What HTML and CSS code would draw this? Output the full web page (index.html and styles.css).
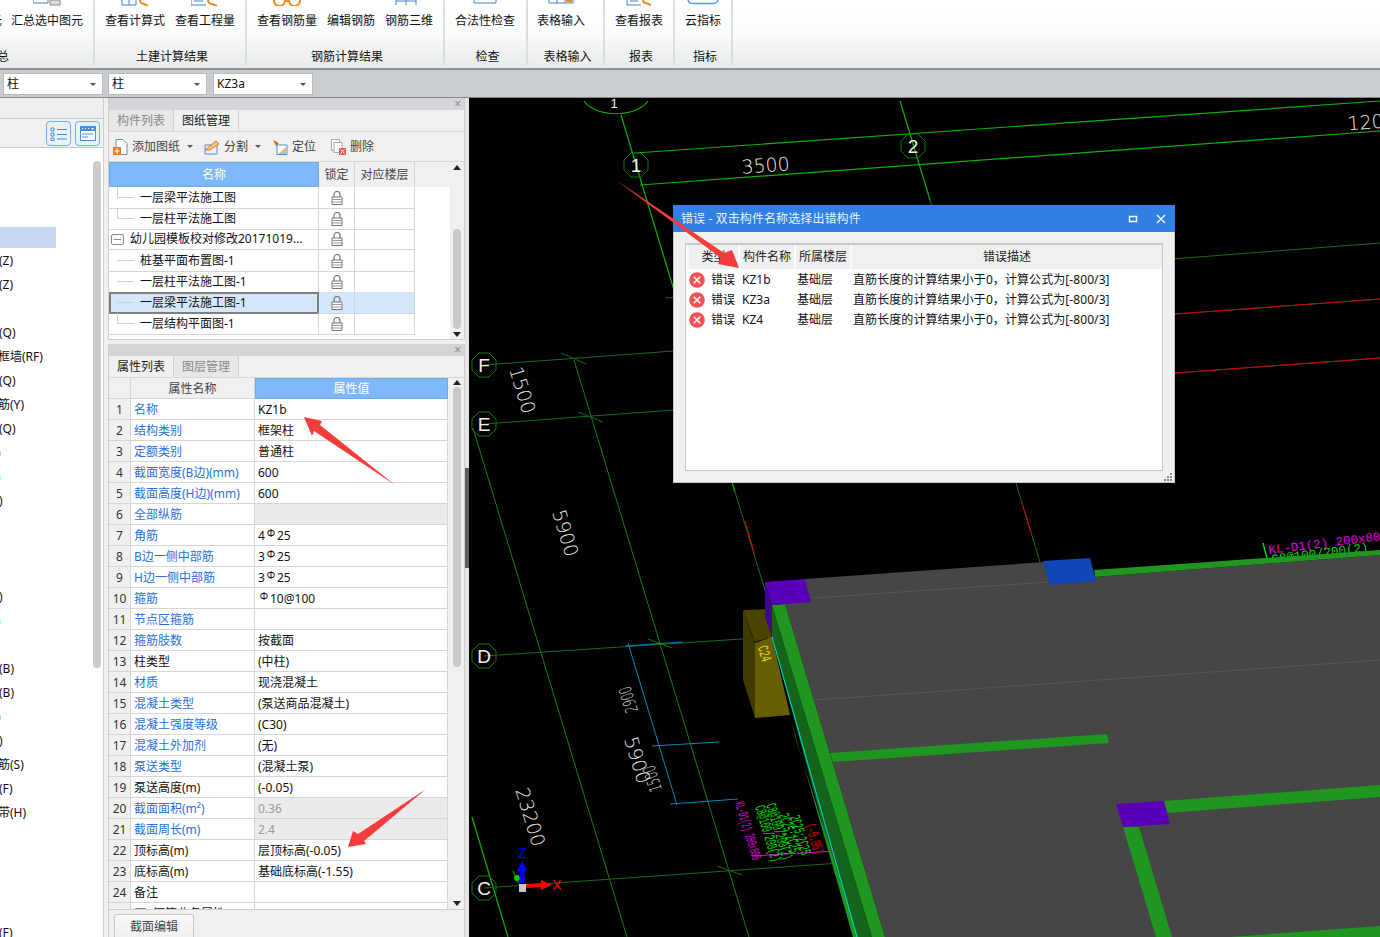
FILE: index.html
```html
<!DOCTYPE html>
<html lang="zh-CN">
<head>
<meta charset="utf-8">
<title>错误 - 双击构件名称选择出错构件</title>
<link rel="stylesheet" href="styles.css">
</head>
<body>
<svg class="defs" width="0" height="0">
  <defs>
    <symbol id="lock" viewBox="0 0 12 14">
      <path d="M3 6V3.5a3 3 0 0 1 6 0V6" fill="none" stroke="#777" stroke-width="1.2"/>
      <path d="M1 6h10v7.5H1z" fill="#fff" stroke="#777"/>
      <path d="M1 8.5h10M1 11h10" stroke="#999"/>
    </symbol>
    <symbol id="err" viewBox="0 0 16 16">
      <circle cx="8" cy="8" r="7.8" fill="#f25252"/>
      <path d="M4.8 4.8l6.4 6.4M11.2 4.8l-6.4 6.4" stroke="#fff" stroke-width="1.6"/>
    </symbol>
  </defs>
</svg>

<header class="ribbon">
  <section class="group g1">
    <div class="btns">
      <div class="btn"><svg class="ri narrow" viewBox="0 0 12 6"></svg><span>元</span></div>
      <div class="btn"><svg class="ri" viewBox="0 0 28 6"><path d="M0 0v3h15V0" fill="none" stroke="#3f86d0"/><path d="M17 0h10v5H17z" fill="#ddd" stroke="#888"/></svg><span>汇总选中图元</span></div>
    </div>
    <div class="glabel">总</div>
  </section>
  <section class="group g2">
    <div class="btns">
      <div class="btn"><svg class="ri" viewBox="0 0 28 6"><path d="M1 0v5h14V0M8 0v5" fill="none" stroke="#3f86d0"/><path d="M19 0a4 4 0 0 0 4 4l4 2" fill="none" stroke="#ef8a1e" stroke-width="2"/></svg><span>查看计算式</span></div>
      <div class="btn"><svg class="ri" viewBox="0 0 28 6"><path d="M0 0v5h15M3 1h9" fill="none" stroke="#3f86d0"/><path d="M17 0a4 4 0 0 0 4 4l5 2" fill="none" stroke="#ef8a1e" stroke-width="2"/></svg><span>查看工程量</span></div>
    </div>
    <div class="glabel">土建计算结果</div>
  </section>
  <section class="group g3">
    <div class="btns">
      <div class="btn"><svg class="ri" viewBox="0 0 28 6"><path d="M1 0a5 5 0 0 0 11 1h4a5 5 0 0 0 11-1" fill="none" stroke="#ef8a1e" stroke-width="2"/></svg><span>查看钢筋量</span></div>
      <div class="btn"><svg class="ri" viewBox="0 0 28 6"></svg><span>编辑钢筋</span></div>
      <div class="btn"><svg class="ri" viewBox="0 0 28 6"><path d="M1 0v5M11 0v5M21 0v5M1 1h20" fill="none" stroke="#3f86d0"/></svg><span>钢筋三维</span></div>
    </div>
    <div class="glabel">钢筋计算结果</div>
  </section>
  <section class="group g4">
    <div class="btns"><div class="btn"><svg class="ri" viewBox="0 0 28 6"><path d="M3 0v3h22V0" fill="none" stroke="#3f86d0"/></svg><span>合法性检查</span></div></div>
    <div class="glabel">检查</div>
  </section>
  <section class="group g5">
    <div class="btns"><div class="btn"><svg class="ri" viewBox="0 0 28 6"><path d="M2 0v3h24V0M10 0v3M18 0v3" fill="none" stroke="#3f86d0"/><path d="M19 0h6v2h-6z" fill="#ef8a1e"/></svg><span>表格输入</span></div></div>
    <div class="glabel">表格输入</div>
  </section>
  <section class="group g6">
    <div class="btns"><div class="btn"><svg class="ri" viewBox="0 0 28 6"><path d="M2 0v5h14M5 1h8" fill="none" stroke="#3f86d0"/><path d="M18 0a3 3 0 0 0 3 3l5 2" fill="none" stroke="#ef8a1e" stroke-width="2"/></svg><span>查看报表</span></div></div>
    <div class="glabel">报表</div>
  </section>
  <section class="group g7">
    <div class="btns"><div class="btn"><svg class="ri wide" viewBox="0 0 32 6"><path d="M1 0c1 4 4 3.500 7 3.500h16c3 0 6 .5 7-3.500" fill="none" stroke="#4a9ae8" stroke-width="1.500"/></svg><span>云指标</span></div></div>
    <div class="glabel">指标</div>
  </section>
</header>

<nav class="selbar">
  <div class="sel s1"><span>柱</span><i class="caret"></i></div>
  <div class="sel s2"><span>柱</span><i class="caret"></i></div>
  <div class="sel s3"><span>KZ3a</span><i class="caret"></i></div>
</nav>

<main class="main">
  <aside class="left">
    <div class="lstrip"></div>
    <div class="ltools">
      <div class="lbtn"><svg width="18" height="14" viewBox="0 0 18 14"><path d="M1 1h3v3H1zM1 6h3v3H1zM1 11h3v2.500H1z" fill="none" stroke="#4a90d9"/><path d="M7 2.500h10M7 7.500h10M7 12h10" stroke="#4a90d9"/></svg></div>
      <div class="lbtn"><svg width="16" height="15" viewBox="0 0 16 15"><path d="M.5.5h15v14H.5z" fill="#fff" stroke="#4a90d9"/><path d="M0 0h16v5H0z" fill="#4a90d9"/><path d="M2 2h1v1H2zM5 2h1v1H5zM8 2h1v1H8zM11 2h3l-1.500 2z" fill="#fff"/><path d="M2 8h11M2 11h6" stroke="#4a90d9"/></svg></div>
    </div>
    <div class="lbody">
      <div class="llist">
        <div class="lr"></div><div class="lr"></div><div class="lr"></div>
        <div class="lr sel-row"><b></b></div>
        <div class="lr">(Z)</div>
        <div class="lr">(Z)</div>
        <div class="lr"></div>
        <div class="lr">(Q)</div>
        <div class="lr on">框墙(RF)</div>
        <div class="lr">(Q)</div>
        <div class="lr on">筋(Y)</div>
        <div class="lr">(Q)</div>
        <div class="lr frag blue">)</div>
        <div class="lr frag cyan">)</div>
        <div class="lr">)</div>
        <div class="lr"></div><div class="lr"></div><div class="lr"></div>
        <div class="lr">)</div>
        <div class="lr frag cyan">)</div>
        <div class="lr"></div>
        <div class="lr">(B)</div>
        <div class="lr">(B)</div>
        <div class="lr frag blue">)</div>
        <div class="lr">)</div>
        <div class="lr on">筋(S)</div>
        <div class="lr">(F)</div>
        <div class="lr on">带(H)</div>
        <div class="lr"></div><div class="lr"></div><div class="lr"></div><div class="lr"></div>
        <div class="lr">(F)</div>
      </div>
      <div class="lthumb"></div>
    </div>
  </aside>

  <div class="mid">
    <section class="panel p1">
      <div class="pstrip"><span>×</span></div>
      <div class="tabs">
        <div class="tab off">构件列表</div>
        <div class="tab active">图纸管理</div>
      </div>
      <div class="ptools">
        <div class="pt t-add"><svg width="15" height="16" viewBox="0 0 15 16"><path d="M3 .5h7l4 4v11H3z" fill="#fff" stroke="#6d8fb5"/><path d="M0 8h8v8H0z" fill="#ef7d1a"/><path d="M4 9.500v5M1.500 12h5" stroke="#fff" stroke-width="1.200"/></svg><span>添加图纸</span><i class="caret"></i></div>
        <div class="pt t-split"><svg width="17" height="16" viewBox="0 0 17 16"><path d="M2 6h12v9H2z" fill="none" stroke="#4a90d9"/><path d="M2 11L13 2l3 3-9 6z" fill="#f5c08a" stroke="#e07c1c"/></svg><span>分割</span><i class="caret"></i></div>
        <div class="pt t-loc"><svg width="16" height="16" viewBox="0 0 16 16"><path d="M5 6h10v9.500H5z" fill="#fff" stroke="#4a90d9"/><path d="M6 15l8-7v7z" fill="#f3b27a"/><path d="M1 1l6 3-3 3z" fill="#e8631c"/></svg><span>定位</span></div>
        <div class="pt t-del"><svg width="15" height="16" viewBox="0 0 15 16"><path d="M.5.500h8v11h-8z" fill="#fff" stroke="#aaa"/><path d="M3 3.500h8v10H3z" fill="#fff" stroke="#aaa"/><path d="M8 9h7v7H8z" fill="#e25c5c"/><path d="M9.500 10.500l4 4M13.500 10.500l-4 4" stroke="#fff"/></svg><span>删除</span></div>
      </div>
      <div class="pbody">
        <div class="dtable">
          <div class="dhead">
            <div class="dh blue">名称</div><div class="dh">锁定</div><div class="dh">对应楼层</div><div class="dh blank"></div>
          </div>
          <div class="drow"><div class="dname"><i class="twig first"></i>一层梁平法施工图</div><div class="dlock"><svg class="lock"><use href="#lock"/></svg></div><div class="dfloor"></div></div>
          <div class="drow"><div class="dname"><i class="twig"></i>一层柱平法施工图</div><div class="dlock"><svg class="lock"><use href="#lock"/></svg></div><div class="dfloor"></div></div>
          <div class="drow"><div class="dname parent"><i class="minus"></i>幼儿园模板校对修改20171019...</div><div class="dlock"><svg class="lock"><use href="#lock"/></svg></div><div class="dfloor"></div></div>
          <div class="drow"><div class="dname"><i class="twig flat"></i>桩基平面布置图-1</div><div class="dlock"><svg class="lock"><use href="#lock"/></svg></div><div class="dfloor"></div></div>
          <div class="drow"><div class="dname"><i class="twig flat"></i>一层柱平法施工图-1</div><div class="dlock"><svg class="lock"><use href="#lock"/></svg></div><div class="dfloor"></div></div>
          <div class="drow picked"><div class="dname"><i class="twig flat"></i>一层梁平法施工图-1</div><div class="dlock"><svg class="lock"><use href="#lock"/></svg></div><div class="dfloor"></div></div>
          <div class="drow"><div class="dname"><i class="twig"></i>一层结构平面图-1</div><div class="dlock"><svg class="lock"><use href="#lock"/></svg></div><div class="dfloor"></div></div>
        </div>
        <div class="vscroll v1"><i class="up"></i><i class="thumb"></i><i class="down"></i></div>
      </div>
    </section>

    <section class="panel p2">
      <div class="pstrip"><span>×</span></div>
      <div class="tabs">
        <div class="tab active">属性列表</div>
        <div class="tab off">图层管理</div>
      </div>
      <div class="pbody prop">
        <div class="ptable">
          <div class="prow head"><div class="no"></div><div class="nm">属性名称</div><div class="val blue">属性值</div></div>
          <div class="prow"><div class="no">1</div><div class="nm lnk">名称</div><div class="val">KZ1b</div></div>
          <div class="prow"><div class="no">2</div><div class="nm lnk">结构类别</div><div class="val">框架柱</div></div>
          <div class="prow"><div class="no">3</div><div class="nm lnk">定额类别</div><div class="val">普通柱</div></div>
          <div class="prow"><div class="no">4</div><div class="nm lnk">截面宽度(B边)(mm)</div><div class="val">600</div></div>
          <div class="prow"><div class="no">5</div><div class="nm lnk">截面高度(H边)(mm)</div><div class="val">600</div></div>
          <div class="prow"><div class="no">6</div><div class="nm lnk">全部纵筋</div><div class="val ro"></div></div>
          <div class="prow"><div class="no">7</div><div class="nm lnk">角筋</div><div class="val">4<span class="rb">Φ</span>25</div></div>
          <div class="prow"><div class="no">8</div><div class="nm lnk">B边一侧中部筋</div><div class="val">3<span class="rb">Φ</span>25</div></div>
          <div class="prow"><div class="no">9</div><div class="nm lnk">H边一侧中部筋</div><div class="val">3<span class="rb">Φ</span>25</div></div>
          <div class="prow"><div class="no">10</div><div class="nm lnk">箍筋</div><div class="val"><span class="rb">Φ</span>10@100</div></div>
          <div class="prow"><div class="no">11</div><div class="nm lnk">节点区箍筋</div><div class="val"></div></div>
          <div class="prow"><div class="no">12</div><div class="nm lnk">箍筋肢数</div><div class="val">按截面</div></div>
          <div class="prow"><div class="no">13</div><div class="nm">柱类型</div><div class="val">(中柱)</div></div>
          <div class="prow"><div class="no">14</div><div class="nm lnk">材质</div><div class="val">现浇混凝土</div></div>
          <div class="prow"><div class="no">15</div><div class="nm lnk">混凝土类型</div><div class="val">(泵送商品混凝土)</div></div>
          <div class="prow"><div class="no">16</div><div class="nm lnk">混凝土强度等级</div><div class="val">(C30)</div></div>
          <div class="prow"><div class="no">17</div><div class="nm lnk">混凝土外加剂</div><div class="val">(无)</div></div>
          <div class="prow"><div class="no">18</div><div class="nm lnk">泵送类型</div><div class="val">(混凝土泵)</div></div>
          <div class="prow"><div class="no">19</div><div class="nm">泵送高度(m)</div><div class="val">(-0.05)</div></div>
          <div class="prow"><div class="no">20</div><div class="nm lnk">截面面积(m²)</div><div class="val ro">0.36</div></div>
          <div class="prow"><div class="no">21</div><div class="nm lnk">截面周长(m)</div><div class="val ro">2.4</div></div>
          <div class="prow"><div class="no">22</div><div class="nm">顶标高(m)</div><div class="val">层顶标高(-0.05)</div></div>
          <div class="prow"><div class="no">23</div><div class="nm">底标高(m)</div><div class="val">基础底标高(-1.55)</div></div>
          <div class="prow"><div class="no">24</div><div class="nm">备注</div><div class="val"></div></div>
          <div class="prow"><div class="no"></div><div class="nm"><i class="minus small"></i>钢筋业务属性</div><div class="val"></div></div>
        </div>
        <div class="vscroll v2"><i class="up"></i><i class="thumb"></i><i class="down"></i></div>
      </div>
      <div class="pfoot"><div class="fbtn">截面编辑</div></div>
    </section>
  </div>

  <div class="splitter"><i></i></div>

  <div class="canvas">
    <svg class="cad" viewBox="469 98 911 839" width="911" height="839">
      <defs>
        <polygon id="oct" points="-12,-5 -5,-12 5,-12 12,-5 12,5 5,12 -5,12 -12,5"/>
      </defs>
      <path class="la" d="M635 153L1380 101M640 185L1380 131"/>
      <path class="la" d="M621 115L735 492M900 101L930 200"/>
      <path class="ld" d="M735 492L768 600M930 200L1040 562"/>
      <path class="lr-red" d="M745 521L755 556M1022 503L1031 533"/>
      <path class="ld" d="M484 365L1380 299M484 424L1380 358M665 298L1380 243"/>
      <path class="lr-red" d="M1175 314L1380 299M1175 373L1380 358"/>
      <path class="lm" d="M574 360L749 937M473 428L627 937"/>
      <path class="la" d="M472 817L508 937"/>
      <path class="ld" d="M484 656L772 637M484 888L840 863M561 353L586 364M578 412L603 422M648 639L672 648M717 866L742 875"/>
      <path class="lb" d="M625 646L683 642M628 643L677 805M652 746L719 742M670 804L738 799"/>
      <path class="la" d="M584 101C596 118 636 118 648 101" />
      <g class="oct">
        <use href="#oct" x="636" y="165"/><use href="#oct" x="913" y="146"/>
        <use href="#oct" x="484" y="365"/><use href="#oct" x="484" y="424"/>
        <use href="#oct" x="484" y="656"/><use href="#oct" x="484" y="888"/>
      </g>
      <g class="bub">
        <text x="636" y="172">1</text><text x="913" y="153">2</text>
        <text x="484" y="372">F</text><text x="484" y="431">E</text>
        <text x="484" y="663">D</text><text x="484" y="895">C</text>
        <text class="tiny" x="614" y="108">1</text>
      </g>
      <g class="dim">
        <text transform="translate(766 172) rotate(-4)">3500</text>
        <text transform="translate(1366 129) rotate(-4)">120</text>
        <text transform="translate(516 392) rotate(73)">1500</text>
        <text transform="translate(559 535) rotate(73)">5900</text>
        <text transform="translate(524 819) rotate(73)">23200</text>
        <text transform="translate(631 762) rotate(73)">5900</text>
        <text transform="translate(634 698) rotate(253) scale(.55 .9)">2900</text>
        <text transform="translate(658 777) rotate(253) scale(.55 .9)">1500</text>
      </g>
      <path class="lg" d="M1263 543L1268 562"/>
      <text class="tm" transform="translate(1269 554) rotate(-7)">KL-D1(2) 200x800</text>
      <text class="tg" transform="translate(1272 563) rotate(-7)">C8@100/200(2)</text>

      <polygon class="yl" points="743,610 755,643 755,718 743,680"/>
      <polygon class="yt" points="743,610 767,609 772,637 755,642"/>
      <polygon class="yf" points="755,643 772,637 790,715 755,718"/>
      <text class="ty" transform="translate(760 655) rotate(73) scale(.6 1)">C24</text>

      <polygon class="slab" points="805,579 1045,562 1095,577 1380,555 1380,937 885,937 785,604"/>
      <path class="seam" d="M812 598L1050 582M813 700L930 692L1380 660"/>
      <polygon class="gd" points="772,605 872,937 853,937 772,637"/>
      <polygon class="gl" points="772,605 785,604 885,937 872,937"/>
      <polygon class="gl" points="790,717 796,740 858,937 853,937"/>
      <path class="cy" d="M772 637L857 937"/>
      <polygon class="gl" points="830,753 1107,734 1109,743 833,762"/>
      <polygon class="gl" points="1094,570 1380,550 1380,555 1095,577"/>
      <polygon class="pt1" points="765,582 805,579 811,602 772,605"/>
      <polygon class="pt2" points="765,582 772,605 772,637 765,617"/>
      <polygon class="bl" points="1043,561 1090,558 1096,581 1050,585"/>
      <polygon class="gl" points="1164,801 1380,785 1380,797 1167,813"/>
      <polygon class="gl" points="1123,827 1139,827 1172,937 1156,937"/>
      <polygon class="gl" points="1230,937 1380,926 1380,937"/>
      <polygon class="pt1" points="1116,804 1164,801 1170,824 1123,827"/>

      <path class="lma" d="M752 856L835 851"/>
      <text class="ma" transform="translate(735 803) rotate(73) scale(.45 1)">KL-D1(2) 200x800</text>
      <text class="gr" transform="translate(755 807) rotate(73) scale(.5 1)">C8@100/200(2)</text>
      <text class="gr" transform="translate(766 805) rotate(73) scale(.5 1)">C8@100/200(2)</text>
      <text class="gr" transform="translate(779 815) rotate(73) scale(.5 1)">2C25;2C25</text>
      <text class="gr" transform="translate(790 817) rotate(73) scale(.5 1)">2C25;2C25</text>
      <text class="rd" transform="translate(805 825) rotate(73) scale(.5 1)">(-0.05)</text>

      <path class="ax-g" d="M513 871L519 884"/><circle class="ax-gc" cx="517" cy="878" r="3"/>
      <path class="ax-b" d="M522 883V866"/><path class="ax-bh" d="M522 861l5 10h-10z"/>
      <path class="ax-r" d="M526 886L545 885"/><path class="ax-rh" d="M552 885l-11 5v-10z"/>
      <rect class="ax-s" x="519" y="884" width="7" height="8"/>
      <text class="axz" x="522" y="858">Z</text>
      <text class="axx" x="557" y="890">X</text>
    </svg>

    <div class="dialog">
      <div class="dtitle">
        <span>错误 - 双击构件名称选择出错构件</span>
        <div class="wctl">
          <svg width="10" height="10" viewBox="0 0 10 10"><path d="M1.500 2.500h7v5h-7z" fill="none" stroke="#fff" stroke-width="1.400"/></svg>
          <svg width="10" height="10" viewBox="0 0 10 10"><path d="M1 1l8 8M9 1l-8 8" stroke="#fff" stroke-width="1.300"/></svg>
        </div>
      </div>
      <div class="dbody">
        <div class="elist">
          <div class="ehead">
            <div>类型</div><div>构件名称</div><div>所属楼层</div><div>错误描述</div>
          </div>
          <div class="erow"><div class="etype"><svg class="erri"><use href="#err"/></svg>错误</div><div>KZ1b</div><div>基础层</div><div class="edesc">直筋长度的计算结果小于0，计算公式为[-800/3]</div></div>
          <div class="erow"><div class="etype"><svg class="erri"><use href="#err"/></svg>错误</div><div>KZ3a</div><div>基础层</div><div class="edesc">直筋长度的计算结果小于0，计算公式为[-800/3]</div></div>
          <div class="erow"><div class="etype"><svg class="erri"><use href="#err"/></svg>错误</div><div>KZ4</div><div>基础层</div><div class="edesc">直筋长度的计算结果小于0，计算公式为[-800/3]</div></div>
        </div>
        <svg class="grip" width="9" height="9" viewBox="0 0 9 9"><path d="M7 1h2v2H7zM4 4h2v2H4zM7 4h2v2H7zM1 7h2v2H1zM4 7h2v2H4zM7 7h2v2H7z" fill="#8a8f96"/></svg>
      </div>
    </div>
  </div>
</main>

<svg class="annot" viewBox="0 0 1380 937" width="1380" height="937">
  <polygon points="616,180 724,253 732,250 739,268 718,264 721,258"/>
  <polygon points="304,417 322,421 320,425 395,485 314,431 312,436"/>
  <polygon points="348,847 353,831 358,834 426,789 364,841 366,844"/>
</svg>
</body>
</html>
```

FILE: styles.css
```css
* { box-sizing: border-box; }
html, body { margin: 0; padding: 0; }
body {
  width: 1380px;
  height: 937px;
  overflow: hidden;
  position: relative;
  background: #f0f0f0;
  color: #111;
  font: 12px/14px "Noto Sans", "Noto Sans CJK SC", sans-serif;
}
.defs { position: absolute; }
i { display: block; font-style: normal; }

/* ribbon */
.ribbon {
  display: flex;
  height: 70px;
  overflow: hidden;
  border-bottom: 2px solid #8c9296;
  background: linear-gradient(#ffffff 0, #fbfcfc 30px, #e9ecec 68px);
}
.group {
  display: flex;
  flex-direction: column;
  height: 65px;
  border-right: 2px solid #dcdfdf;
}
.g1 { width: 95px; }
.g2 { width: 152px; }
.g3 { width: 198px; }
.g4 { width: 83px; }
.g5 { width: 77px; }
.g6 { width: 70px; }
.g7 { width: 58px; }
.btns { display: flex; gap: 10px; padding-left: 10px; height: 50px; }
.g1 .btns { padding-left: 0; margin-left: -10px; gap: 9px; }
.g5 .btns { padding-left: 9px; }
.btn { display: flex; flex-direction: column; align-items: center; }
.ri { width: 28px; height: 6px; margin-bottom: 8px; }
.ri.wide { width: 32px; }
.ri.narrow { width: 12px; }
.glabel { padding-left: 4px; text-align: center; line-height: 14px; }
.g1 .glabel { padding: 0; margin-left: -3px; text-align: left; }

/* selector bar */
.selbar {
  display: flex;
  height: 28px;
  padding: 3px 0 0 3px;
  background: #c9ccd0;
  border-bottom: 1px solid #85888c;
}
.sel {
  display: flex;
  justify-content: space-between;
  align-items: center;
  height: 22px;
  padding: 0 6px 0 3px;
  background: #fff;
  border: 1px solid #b9bbbe;
}
.s1 { width: 100px; }
.s2 { width: 99px; margin-left: 5px; }
.s3 { width: 100px; margin-left: 6px; }
.caret {
  width: 0;
  height: 0;
  border: 3px solid transparent;
  border-top: 3px solid #555;
  border-bottom: 0;
}

/* main */
.main { display: flex; height: 839px; }
.left {
  display: flex;
  flex-direction: column;
  width: 104px;
  flex: none;
  border-right: 1px solid #cfcfcf;
}
.lstrip { height: 21px; background: #efefef; border-bottom: 1px solid #c8c8c8; }
.ltools {
  display: flex;
  justify-content: flex-end;
  gap: 4px;
  height: 29px;
  padding: 2px 3px 0 0;
  background: #f0f0f0;
  border-bottom: 1px solid #c8c8c8;
}
.lbtn {
  display: flex;
  align-items: center;
  justify-content: center;
  width: 25px;
  height: 25px;
  background: #e8f2fc;
  border: 1px solid #6cb0f4;
  border-radius: 4px;
}
.lbody { display: flex; flex: 1; background: #fff; overflow: hidden; padding-top: 5px; }
.llist { width: 93px; }
.lr {
  display: flex;
  align-items: center;
  height: 24px;
  margin-left: -1px;
  white-space: nowrap;
}
.lr.on { margin-left: -2px; }
.lr.frag { margin-left: -3px; }
.lr.blue { color: #1030d0; }
.lr.cyan { color: #30e0f0; }
.lr.sel-row { margin-left: 0; }
.sel-row b { display: block; width: 56px; height: 21px; background: #c8d8f0; }
.lthumb {
  width: 8px;
  height: 507px;
  margin-top: 8px;
  background: #cbcbcb;
  border-radius: 4px;
}

/* middle panels */
.mid {
  display: flex;
  flex-direction: column;
  gap: 4px;
  width: 361px;
  flex: none;
  padding: 0 0 0 4px;
}
.panel { display: flex; flex-direction: column; border: 1px solid #cfcfcf; border-top: 0; background: #f0f0f0; }
.p1 { height: 242px; }
.p2 { flex: 1; height: 593px; border-bottom: 0; }
.pstrip {
  display: flex;
  justify-content: flex-end;
  align-items: center;
  height: 12px;
  padding-right: 3px;
  background: #d3d5d9;
  color: #8a8d91;
  font-size: 12px;
  line-height: 12px;
}
.tabs { display: flex; height: 22px; background: #f0f0f0; border-bottom: 1px solid #d8d8d8; }
.tab {
  display: flex;
  align-items: center;
  justify-content: center;
  width: 65px;
  height: 21px;
  border-right: 1px solid #cfcfcf;
}
.tab.off { color: #8a8a8a; background: #e7e7e7; }
.tab.active { color: #222; background: #f0f0f0; }
.ptools { display: flex; height: 30px; align-items: center; padding-left: 4px; border-bottom: 1px solid #d8d8d8; color: #444; }
.pt { display: flex; align-items: center; gap: 4px; }
.t-add .caret { margin-left: 3px; }
.t-split { margin-left: 10px; }
.t-split .caret { margin-left: 3px; }
.t-loc { margin-left: 11px; }
.t-del { margin-left: 15px; }
.pbody { display: flex; background: #fff; flex: 1; min-height: 0; }

.dtable { width: 341px; }
.dhead { display: grid; grid-template-columns: 210px 36px 60px 35px; height: 25px; }
.dh {
  display: flex;
  align-items: center;
  justify-content: center;
  background: #f0f0f0;
  border-right: 1px solid #d6d6d6;
  color: #444;
}
.dh.blue { background: #7fb8f8; border: 1px solid #6cabef; color: #fff; }
.dh.blank { border: 0; }
.drow { display: grid; grid-template-columns: 210px 36px 60px; width: 306px; height: 21px; }
.drow > div { display: flex; align-items: center; border-bottom: 1px solid #d6d6d6; border-right: 1px solid #d6d6d6; }
.dname { padding-left: 8px; white-space: nowrap; }
.dname.parent { padding-left: 2px; }
.dlock { justify-content: center; }
.lock { width: 12px; height: 14px; }
.twig {
  width: 17px;
  height: 11px;
  margin: 0 6px 10px 0;
  border-left: 1px solid #d0d0d0;
  border-bottom: 1px solid #d0d0d0;
}
.twig.first { height: 11px; }
.twig.flat { border-left: 0; }
.minus {
  width: 13px;
  height: 11px;
  margin-right: 6px;
  border: 1px solid #888;
  border-radius: 2px;
  background: linear-gradient(#888, #888) center / 7px 1px no-repeat;
}
.minus.small { display: inline-block; vertical-align: middle; margin-left: 0; }
.drow.picked > div { background: #d3e6fa; }
.drow.picked .dname { outline: 2px solid #808080; outline-offset: -2px; }
.vscroll { position: relative; flex: none; background: #f0f0f0; }
.vscroll .up, .vscroll .down {
  position: absolute;
  left: 3px;
  border: 4px solid transparent;
}
.vscroll .up { border-bottom: 5px solid #222; border-top: 0; }
.vscroll .down { border-top: 5px solid #222; border-bottom: 0; }
.vscroll .thumb { position: absolute; left: 3px; width: 8px; background: #c8c8c8; border-radius: 4px; }
.v1 { width: 14px; }
.v1 .up { top: 3px; }
.v1 .thumb { top: 67px; height: 100px; }
.v1 .down { top: 170px; }

.prop { height: 531px; flex: none; }
.ptable { width: 339px; overflow: hidden; }
.prow { display: grid; grid-template-columns: 22px 124px 193px; height: 21px; }
.prow > div {
  display: flex;
  align-items: center;
  padding-top: 1px;
  white-space: nowrap;
  border-right: 1px solid #d6d6d6;
  border-bottom: 1px solid #d6d6d6;
}
.no { justify-content: center; background: #f0f0f0; color: #333; }
.prow .nm { padding-left: 3px; }
.nm.lnk { color: #2a6fdf; }
.prow .val { padding-left: 3px; }
.prow .val.ro { background: #ebebeb; color: #9a9a9a; }
.rb {
  display: inline-block;
  position: relative;
  top: -3px;
  width: 12px;
  font-size: 10px;
  line-height: 10px;
  text-align: center;
}
.prow.head > div { justify-content: center; padding: 1px 0 0; background: #f0f0f0; color: #444; }
.prow.head .val.blue { padding: 1px 0 0; background: #7fb8f8; border: 1px solid #6cabef; color: #fff; }
.v2 { width: 16px; }
.v2 .up { top: 2px; left: 5px; }
.v2 .thumb { top: 9px; left: 5px; height: 280px; }
.v2 .down { top: 523px; left: 5px; }
.pfoot { height: 28px; padding: 4px 0 0 5px; background: #f0f0f0; border-top: 1px solid #cfcfcf; }
.fbtn {
  display: flex;
  align-items: center;
  justify-content: center;
  width: 80px;
  height: 26px;
  background: linear-gradient(#fafafa, #efefef);
  border: 1px solid #c6c6c6;
  border-radius: 3px;
  color: #444;
}
.splitter { display: flex; align-items: center; width: 4px; flex: none; background: #e6e6e6; }
.splitter i { width: 4px; height: 100px; background: #5a5d60; }

/* cad canvas */
.canvas { position: relative; flex: 1; background: #000; overflow: hidden; }
.cad { display: block; }
.cad path { fill: none; }
.la { stroke: #0bb00b; stroke-width: 1.200; }
.ld { stroke: #1a6a1a; stroke-width: 1; }
.lm { stroke: #0f800f; stroke-width: 1; }
.lg { stroke: #00d000; stroke-width: 1.500; }
.lr-red { stroke: #d00000; stroke-width: 1; }
.lb { stroke: #0088b8; stroke-width: 1; }
.oct { fill: none; stroke: #0b7a0b; stroke-width: 1; }
.bub { fill: #f0f0f0; font: 19px "Liberation Sans", sans-serif; text-anchor: middle; }
.bub .tiny { font-size: 13px; }
.dim { fill: #e8e8e8; font: 19px "DejaVu Sans", sans-serif; font-weight: 200; text-anchor: middle; }
.tm { fill: #e000e0; font: 12.500px "Liberation Mono", monospace; }
.tg { fill: #00d800; font: 12.500px "Liberation Mono", monospace; }
.ty { fill: #e8e000; font: 15px "Liberation Mono", monospace; text-anchor: middle; }
.yl { fill: #3f3a00; }
.yt { fill: #4a4400; }
.yf { fill: #665e00; }
.slab { fill: #464646; }
.cad .seam { stroke: #5a5a5a; stroke-width: .8; }
.gd { fill: #14641c; }
.gl { fill: #1f961f; }
.cad .cy { stroke: #00d8d8; stroke-width: 1; }
.pt1 { fill: #5a00b8; }
.pt2 { fill: #3d0a90; }
.bl { fill: #1146b8; }
.cad .lma { stroke: #e000e0; }
.ma { fill: #e000e0; font: 14px "Liberation Mono", monospace; }
.gr { fill: #00e000; font: 15px "Liberation Mono", monospace; }
.rd { fill: #e00000; font: 15px "Liberation Mono", monospace; }
.cad .ax-g { stroke: #00b000; }
.ax-gc { fill: #00d000; }
.cad .ax-b { stroke: #0000ff; stroke-width: 5; }
.cad .ax-bh { fill: #0000ff; }
.cad .ax-r { stroke: #ff0000; stroke-width: 4; }
.cad .ax-rh { fill: #ff0000; }
.ax-s { fill: #c8c8c8; }
.axz { fill: #0000ff; font: 14px "Liberation Sans", sans-serif; text-anchor: middle; }
.axx { fill: #ff0000; font: 14px "Liberation Sans", sans-serif; text-anchor: middle; }

/* dialog */
.dialog {
  position: absolute;
  left: 204px;
  top: 107px;
  display: flex;
  flex-direction: column;
  width: 502px;
  height: 278px;
  background: #f0f0f0;
  border: 1px solid #c4c8ce;
  border-top: 0;
}
.dtitle {
  display: flex;
  justify-content: space-between;
  align-items: center;
  height: 27px;
  margin: 0 -1px;
  padding: 0 9px 0 8px;
  background: #2f80e2;
  color: #e8f2ff;
  flex: none;
  letter-spacing: .1px;
}
.wctl { display: flex; gap: 18px; }
.dbody { position: relative; flex: 1; padding: 11px; }
.elist { height: 228px; padding-left: 1px; background: #fff; border: 1px solid #c8c8c8; border-top-width: 2px; }
.ehead {
  display: grid;
  grid-template-columns: 51px 56px 56px 1fr;
  height: 24px;
  background: #f0f0f0;
  margin-bottom: 1px;
}
.ehead > div {
  display: flex;
  align-items: center;
  justify-content: center;
  border-left: 2px solid #fbfbfb;
  color: #222;
}
.erow {
  display: grid;
  grid-template-columns: 51px 56px 56px 1fr;
  align-items: center;
  height: 20px;
  white-space: nowrap;
}
.erow > div { padding-left: 3px; }
.erow > div:nth-child(2) { padding-left: 4px; }
.erow .edesc { letter-spacing: .08px; }
.erow .etype { display: flex; align-items: center; gap: 6px; padding-left: 2px; }
.erri { width: 16px; height: 16px; flex: none; }
.grip { position: absolute; right: 2px; bottom: 1px; }

/* annotation arrows drawn over everything */
.annot { position: absolute; left: 0; top: 0; pointer-events: none; }
.annot polygon { fill: #f53c3c; }
```
